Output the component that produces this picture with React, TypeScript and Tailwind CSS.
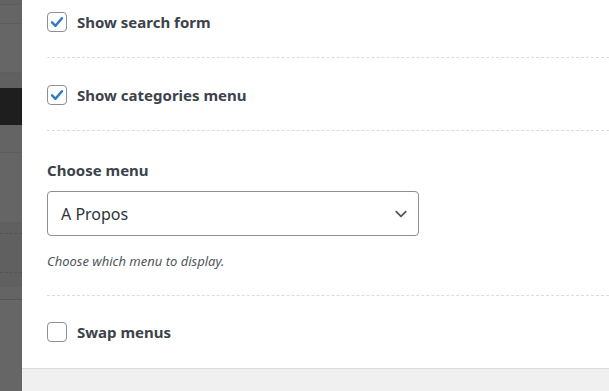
import React from 'react';

const font = { fontFamily: '"Noto Sans", "Open Sans", sans-serif' };

const CheckRow = ({ label, checked }: { label: string; checked: boolean }) => (
  <label className="flex h-[20px] items-center gap-[10px]">
    <span className="flex h-[20px] w-[20px] items-center justify-center rounded-[4px] border border-[#8c8f94] bg-white">
      {checked && (
        <svg viewBox="0 0 20 20" className="h-[18px] w-[18px]">
          <path d="M4.5 10.5 L8.3 14.2 L15.5 5.8" fill="none" stroke="#2f7ac6" strokeWidth="2.8" strokeLinecap="round" strokeLinejoin="round" />
        </svg>
      )}
    </span>
    <span className="text-[15px] font-bold leading-[20px] text-[#3c434a]">{label}</span>
  </label>
);

const Divider = () => <div className="border-t border-dashed border-[#dcdcde]" />;

export default function App() {
  return (
    <div className="flex h-[391px] w-[609px] overflow-hidden bg-[#666666]" style={font}>
      {/* dimmed page behind the drawer */}
      <div className="flex w-[22px] shrink-0 flex-col">
        <div className="h-[5px] border-b border-[#5e5e5e] bg-[#636363]" />
        <div className="h-[19px] border-b border-[#5e5e5e] bg-[#656565]" />
        <div className="h-[49px] border-b border-[#5e5e5e] bg-[#666666]" />
        <div className="h-[15px] bg-[#606060]" />
        <div className="h-[37px] bg-[#1e1e1e]" />
        <div className="h-[28px] border-b border-[#5e5e5e] bg-[#646464]" />
        <div className="h-[69px] bg-[#656565]" />
        <div className="h-[12px] border-b border-dashed border-[#555] bg-[#606060]" />
        <div className="h-[39px] border-b border-dashed border-[#555] bg-[#606060]" />
        <div className="h-[14px] bg-[#606060]" />
        <div className="h-[13px] border-b border-[#555] bg-[#646464]" />
        <div className="flex-1 bg-[#666666]" />
      </div>

      {/* drawer */}
      <div className="flex flex-1 flex-col bg-white">
        <div className="flex flex-1 flex-col pl-[25px]">
          <div className="pb-[25px] pt-[12px]">
            <CheckRow label="Show search form" checked />
          </div>
          <Divider />
          <div className="pb-[25px] pt-[27px]">
            <CheckRow label="Show categories menu" checked />
          </div>
          <Divider />
          <div className="pt-[28px]">
            <div className="text-[15px] font-bold leading-[22px] text-[#3c434a]">Choose menu</div>
            <div className="mt-[10px] flex h-[45px] w-[372px] items-center justify-between rounded-[4px] border border-[#8c8f94] pl-[13px] pr-[9px]">
              <span className="text-[16px] leading-[22px] text-[#2c3338]">A Propos</span>
              <svg viewBox="0 0 20 20" className="h-[16px] w-[16px]">
                <path d="M4 7 L10 13 L16 7" fill="none" stroke="#50575e" strokeWidth="2.2" strokeLinecap="round" strokeLinejoin="round" />
              </svg>
            </div>
            <p className="mt-[17px] text-[13px] italic leading-[16px] text-[#50575e]">Choose which menu to display.</p>
          </div>
          <div className="mt-[26px]">
            <Divider />
          </div>
          <div className="pt-[26px]">
            <CheckRow label="Swap menus" checked={false} />
          </div>
        </div>
        <div className="h-[23px] border-t border-[#dcdcde] bg-[#f0f0f1]" />
      </div>
    </div>
  );
}
